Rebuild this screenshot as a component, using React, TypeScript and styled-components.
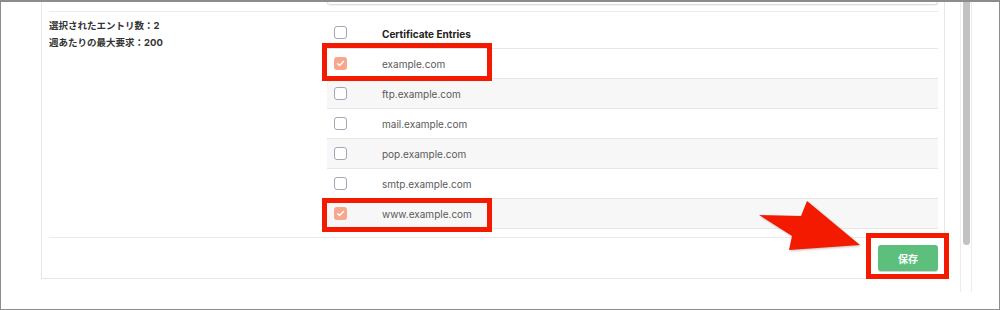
import styled, { createGlobalStyle } from 'styled-components';

const GlobalStyle = createGlobalStyle`
  body {
    margin: 0;
    background: #ffffff;
  }
`;

const Frame = styled.div`
  position: relative;
  width: 1000px;
  height: 310px;
  box-sizing: border-box;
  border: 1px solid #8c8c8c;
  border-top-width: 2px;
  padding-left: 40px;
  display: flex;
  align-items: flex-start;
  overflow: hidden;
  background: #ffffff;
  font-family: Inter, 'Noto Sans CJK JP', sans-serif;
`;

const Panel = styled.div`
  width: 904px;
  height: 277px;
  box-sizing: border-box;
  border: 1px solid #e6e6e6;
  border-top: none;
  padding: 0 6px 0 7px;
  display: flex;
  flex-direction: column;
`;

const PrevStub = styled.div`
  margin-left: 278px;
  height: 2px;
  border: 1px solid #dcdcdc;
  border-top: none;
  border-radius: 0 0 3px 3px;
  box-shadow: 0 1px 2px rgba(0, 0, 0, 0.06);
  margin-bottom: 6px;
`;

const Section = styled.div`
  display: flex;
  border-top: 1px solid #ebebeb;
  border-bottom: 1px solid #ebebeb;
  padding-bottom: 8px;
`;

const InfoCol = styled.div`
  width: 278px;
  padding-top: 5px;
  font-family: Inter, 'Noto Sans CJK JP', sans-serif;
  font-size: 9.5px;
  font-weight: 700;
  line-height: 17px;
  color: #333333;
`;

const Table = styled.div`
  flex: 1;
  display: flex;
  flex-direction: column;
`;

const HeaderRow = styled.div`
  height: 37px;
  box-sizing: border-box;
  display: flex;
  align-items: flex-end;
  padding-bottom: 9px;
  border-bottom: 1px solid #e6e6e6;
`;

const Row = styled.div<{ $shaded: boolean }>`
  height: 30px;
  box-sizing: border-box;
  display: flex;
  align-items: center;
  border-bottom: 1px solid #e6e6e6;
  background: ${(p) => (p.$shaded ? '#f7f7f7' : '#ffffff')};
`;

const CheckCell = styled.div`
  width: 55px;
  padding-left: 7px;
  box-sizing: border-box;
  display: flex;
  align-items: center;
`;

const Box = styled.span<{ $checked: boolean }>`
  width: 13px;
  height: 13px;
  box-sizing: border-box;
  border-radius: 3px;
  border: ${(p) => (p.$checked ? 'none' : '1.5px solid #a2a6b6')};
  background: ${(p) => (p.$checked ? '#f6a78c' : '#ffffff')};
  display: flex;
  align-items: center;
  justify-content: center;
`;

const HeaderText = styled.span`
  font-size: 10px;
  font-weight: 700;
  color: #222222;
  margin-bottom: -1px;
`;

const CellText = styled.span`
  font-size: 10px;
  color: #5a5a5a;
`;

const Footer = styled.div`
  display: flex;
  justify-content: flex-end;
  padding: 7px 0 0;
`;

const SaveButton = styled.button`
  width: 60px;
  height: 26px;
  border: none;
  border-radius: 3px;
  background: #5cbf7c;
  box-shadow: 0 1px 1px rgba(0, 0, 0, 0.2);
  color: #ffffff;
  font-family: 'Noto Sans CJK JP', sans-serif;
  font-size: 10px;
  font-weight: 700;
  cursor: pointer;
`;

const ScrollTrack = styled.div`
  margin-left: 15px;
  width: 12px;
  height: 290px;
  box-sizing: border-box;
  border-left: 1px solid #ececec;
  border-right: 1px solid #ececec;
  padding-left: 2px;
`;

const ScrollThumb = styled.div`
  width: 7px;
  height: 243px;
  border-radius: 0 0 4px 4px;
  background: #c2c2c2;
`;

const Highlight = styled.div<{ $x: number; $y: number; $w: number; $h: number }>`
  position: absolute;
  left: ${(p) => p.$x}px;
  top: ${(p) => p.$y}px;
  width: ${(p) => p.$w}px;
  height: ${(p) => p.$h}px;
  box-sizing: border-box;
  border: 5px solid #f41a00;
  pointer-events: none;
`;

const Arrow = styled.svg`
  position: absolute;
  left: 754px;
  top: 193px;
  filter: drop-shadow(1px 1px 1px rgba(0, 0, 0, 0.25));
`;

const entries = [
  { host: 'example.com', checked: true },
  { host: 'ftp.example.com', checked: false },
  { host: 'mail.example.com', checked: false },
  { host: 'pop.example.com', checked: false },
  { host: 'smtp.example.com', checked: false },
  { host: 'www.example.com', checked: true },
];

const Check = ({ checked }: { checked: boolean }) => (
  <Box $checked={checked}>
    {checked && (
      <svg width="9" height="9" viewBox="0 0 10 10">
        <polyline
          points="1.8,5.2 4,7.3 8.3,2.7"
          fill="none"
          stroke="#ffffff"
          strokeWidth="1.6"
          strokeLinecap="round"
          strokeLinejoin="round"
        />
      </svg>
    )}
  </Box>
);

export default function App() {
  return (
    <>
      <GlobalStyle />
      <Frame>
        <Panel>
          <PrevStub />
          <Section>
            <InfoCol>
              <div>選択されたエントリ数：2</div>
              <div>週あたりの最大要求：200</div>
            </InfoCol>
            <Table>
              <HeaderRow>
                <CheckCell>
                  <Check checked={false} />
                </CheckCell>
                <HeaderText>Certificate Entries</HeaderText>
              </HeaderRow>
              {entries.map((e, i) => (
                <Row key={e.host} $shaded={i % 2 === 1}>
                  <CheckCell>
                    <Check checked={e.checked} />
                  </CheckCell>
                  <CellText>{e.host}</CellText>
                </Row>
              ))}
            </Table>
          </Section>
          <Footer>
            <SaveButton>保存</SaveButton>
          </Footer>
        </Panel>
        <ScrollTrack>
          <ScrollThumb />
        </ScrollTrack>

        <Highlight $x={321} $y={41} $w={170} $h={38} />
        <Highlight $x={321} $y={196} $w={170} $h={34} />
        <Highlight $x={865} $y={231} $w={83} $h={46} />
        <Arrow width="110" height="60" viewBox="0 0 110 60">
          <polygon points="4,20 46,21 52,6 105,50 34,55 37,41" fill="#f41a00" />
        </Arrow>
      </Frame>
    </>
  );
}
